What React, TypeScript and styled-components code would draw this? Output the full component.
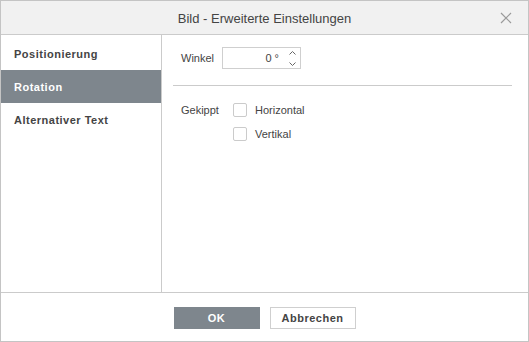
import styled, { createGlobalStyle } from 'styled-components'

const GlobalStyle = createGlobalStyle`
  html, body {
    margin: 0;
    padding: 0;
    background: #fff;
  }
  body {
    font-family: Arial, 'Liberation Sans', Helvetica, sans-serif;
    color: #444;
  }
  * {
    box-sizing: border-box;
  }
`

const Dialog = styled.div`
  width: 529px;
  height: 342px;
  display: flex;
  flex-direction: column;
  border: 1px solid #c4c4c4;
  background: #fff;
`

const Header = styled.div`
  height: 34px;
  flex: none;
  display: grid;
  grid-template-columns: 1fr auto 1fr;
  align-items: center;
  background: #f1f1f1;
  border-bottom: 1px solid #cbcbcb;
`

const Title = styled.div`
  grid-column: 2;
  font-size: 13px;
  color: #444;
  padding-top: 1px;
`

const Close = styled.button`
  grid-column: 3;
  justify-self: end;
  margin-right: 16px;
  width: 12px;
  height: 12px;
  padding: 0;
  border: none;
  background: none;
  display: flex;
  align-items: center;
  justify-content: center;
`

const Body = styled.div`
  flex: 1;
  display: flex;
  min-height: 0;
`

const Sidebar = styled.div`
  width: 161px;
  flex: none;
  padding-top: 2px;
  border-right: 1px solid #cbcbcb;
  display: flex;
  flex-direction: column;
`

const NavItem = styled.div<{ $active?: boolean }>`
  height: 33px;
  display: flex;
  align-items: center;
  padding-left: 13px;
  font-size: 11px;
  font-weight: bold;
  letter-spacing: 0.5px;
  color: ${(p) => (p.$active ? '#fff' : '#444')};
  background: ${(p) => (p.$active ? '#7e868d' : 'transparent')};
`

const Content = styled.div`
  flex: 1;
  padding: 12px 16px 0 11px;
  display: flex;
  flex-direction: column;
`

const Row = styled.div<{ $top?: boolean }>`
  display: flex;
  align-items: ${(p) => (p.$top ? 'flex-start' : 'center')};
  padding-left: 8px;
`

const Label = styled.div<{ $width: number }>`
  width: ${(p) => p.$width}px;
  font-size: 11px;
  line-height: 14px;
  color: #444;
  flex: none;
`

const Spin = styled.div`
  width: 79px;
  height: 22px;
  border: 1px solid #cfcfcf;
  display: flex;
  align-items: center;
  justify-content: flex-end;
  font-size: 11px;
  color: #444;
`

const SpinValue = styled.span`
  margin-right: 6px;
`

const Arrows = styled.div`
  width: 14px;
  height: 20px;
  display: flex;
  flex-direction: column;
  align-items: center;
  justify-content: space-between;
  padding: 3px 0 2px;
  margin-right: 1px;
`

const Divider = styled.div`
  height: 1px;
  background: #cbcbcb;
  margin: 16px 0 17px;
`

const CheckList = styled.div`
  display: flex;
  flex-direction: column;
  gap: 10px;
`

const CheckRow = styled.label`
  display: flex;
  align-items: center;
  gap: 8px;
  font-size: 11px;
  color: #444;
`

const Box = styled.span`
  width: 14px;
  height: 14px;
  border: 1px solid #cbcbcb;
  border-radius: 2px;
  background: #fff;
`

const Footer = styled.div`
  height: 49px;
  flex: none;
  border-top: 1px solid #cbcbcb;
  display: flex;
  justify-content: center;
  align-items: flex-start;
  gap: 10px;
  padding-top: 14px;
`

const Button = styled.button<{ $primary?: boolean }>`
  width: 86px;
  height: 22px;
  padding: 0;
  font-family: inherit;
  font-size: 11px;
  font-weight: bold;
  letter-spacing: 0.5px;
  border: 1px solid ${(p) => (p.$primary ? '#7e868d' : '#cfcfcf')};
  background: ${(p) => (p.$primary ? '#7e868d' : '#fff')};
  color: ${(p) => (p.$primary ? '#fff' : '#444')};
`

export default function App() {
  return (
    <>
      <GlobalStyle />
      <Dialog>
        <Header>
          <Title>Bild - Erweiterte Einstellungen</Title>
          <Close aria-label='Schließen'>
            <svg width='12' height='12' viewBox='0 0 12 12'>
              <path d='M1 1L11 11M11 1L1 11' stroke='#9a9a9a' strokeWidth='1.2' fill='none' />
            </svg>
          </Close>
        </Header>
        <Body>
          <Sidebar>
            <NavItem>Positionierung</NavItem>
            <NavItem $active>Rotation</NavItem>
            <NavItem>Alternativer Text</NavItem>
          </Sidebar>
          <Content>
            <Row>
              <Label $width={41}>Winkel</Label>
              <Spin>
                <SpinValue>0 °</SpinValue>
                <Arrows>
                  <svg width='7' height='4' viewBox='0 0 7 4'>
                    <path d='M0.5 3.5L3.5 0.5L6.5 3.5' stroke='#666' strokeWidth='1' fill='none' />
                  </svg>
                  <svg width='7' height='4' viewBox='0 0 7 4'>
                    <path d='M0.5 0.5L3.5 3.5L6.5 0.5' stroke='#666' strokeWidth='1' fill='none' />
                  </svg>
                </Arrows>
              </Spin>
            </Row>
            <Divider />
            <Row $top>
              <Label $width={52}>Gekippt</Label>
              <CheckList>
                <CheckRow>
                  <Box />
                  Horizontal
                </CheckRow>
                <CheckRow>
                  <Box />
                  Vertikal
                </CheckRow>
              </CheckList>
            </Row>
          </Content>
        </Body>
        <Footer>
          <Button $primary>OK</Button>
          <Button>Abbrechen</Button>
        </Footer>
      </Dialog>
    </>
  )
}
